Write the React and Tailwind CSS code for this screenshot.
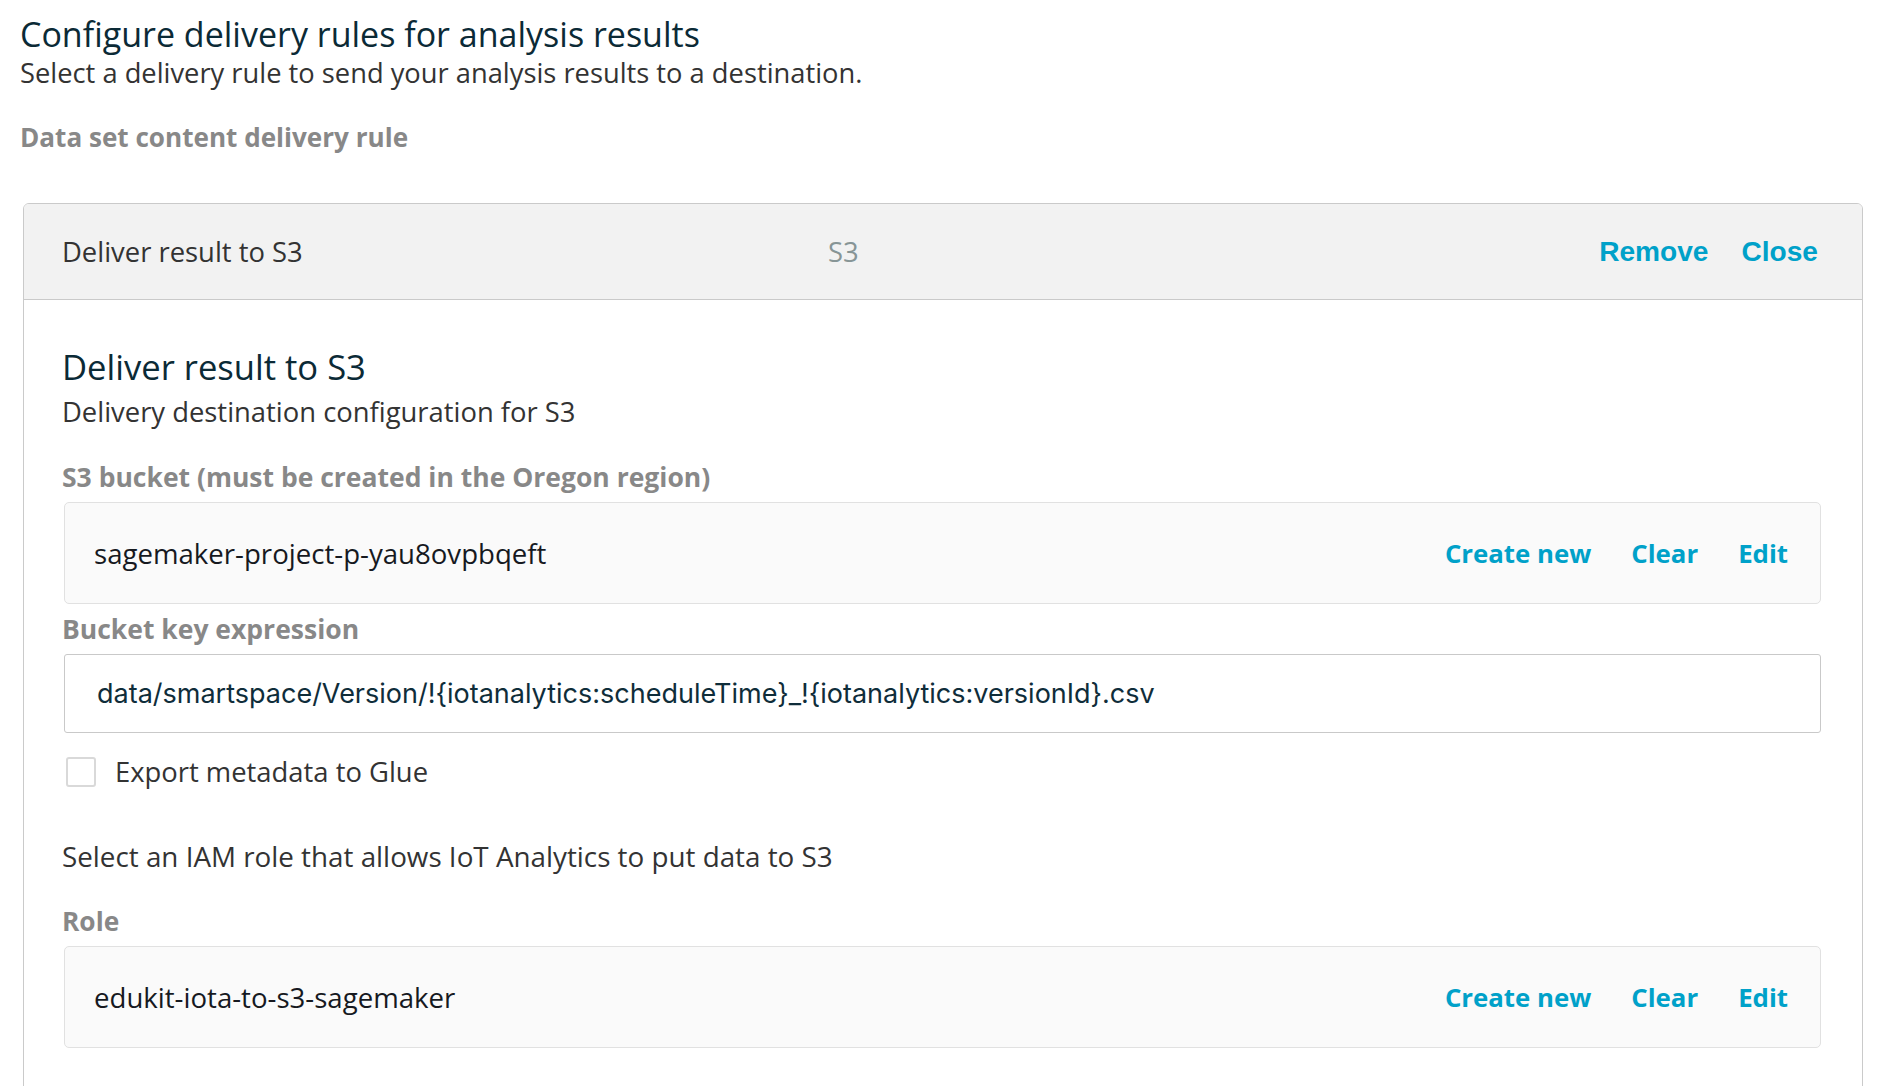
import React, { useState } from 'react';

const sans = "font-['Open_Sans','Noto_Sans',sans-serif]";

function LinkActions() {
    return (
        <div className="flex items-center gap-[40px] text-[25.8px] font-bold leading-[34px] text-[#00a1c9]">
            <button type="button">Create new</button>
            <button type="button">Clear</button>
            <button type="button">Edit</button>
        </div>
    );
}

function ResourceField({ value }) {
    return (
        <div className="flex h-[102px] items-center justify-between rounded-[5px] border border-[#e1e1e1] bg-[#fafafa] pl-[29px] pr-[32px]">
            <span className="text-[27.6px] leading-[34px] text-[#16191f]">{value}</span>
            <LinkActions />
        </div>
    );
}

export default function App() {
    const [exportGlue, setExportGlue] = useState(false);

    return (
        <div className={`${sans} min-h-screen bg-white pl-[20px] pr-[29px] pt-[14px]`}>
            {/* Page heading */}
            <h1 className="text-[34px] font-normal leading-[41px] text-[#0b2a36]">
                Configure delivery rules for analysis results
            </h1>
            <p className="mt-[1px] text-[27.3px] leading-[34px] text-[#333]">
                Select a delivery rule to send your analysis results to a destination.
            </p>
            <div className="mt-[30px] text-[26.1px] font-bold leading-[34px] text-[#888]">
                Data set content delivery rule
            </div>

            {/* Rule card */}
            <div className="ml-[3px] mt-[49px] overflow-hidden rounded-t-[6px] border border-[#cacaca]">
                <div className="flex h-[96px] items-center border-b border-[#cacaca] bg-[#f2f2f2] pl-[38px] pr-[44px]">
                    <span className="w-[766px] shrink-0 text-[27.4px] leading-[34px] text-[#333]">Deliver result to S3</span>
                    <span className="text-[27.4px] leading-[34px] text-[#879596]">S3</span>
                    <div className="ml-auto flex items-center gap-[33px] font-['Liberation_Sans',Arial,sans-serif] text-[28.1px] font-bold leading-[34px] text-[#00a1c9]">
                        <button type="button">Remove</button>
                        <button type="button">Close</button>
                    </div>
                </div>

                <div className="pb-[60px] pl-[40px] pr-[41px] pt-[46px]">
                    <h2 className="-ml-[2px] text-[34.6px] font-normal leading-[42px] text-[#0b2a36]">Deliver result to S3</h2>
                    <p className="-ml-[2px] mt-[7px] text-[27.4px] leading-[34px] text-[#333]">
                        Delivery destination configuration for S3
                    </p>

                    <div className="-ml-[2px] mt-[31px] text-[26.5px] font-bold leading-[34px] text-[#888]">
                        S3 bucket (must be created in the Oregon region)
                    </div>
                    <div className="mt-[8px]">
                        <ResourceField value="sagemaker-project-p-yau8ovpbqeft" />
                    </div>

                    <div className="-ml-[2px] mt-[8px] text-[26.5px] font-bold leading-[34px] text-[#888]">
                        Bucket key expression
                    </div>
                    <div className="mt-[8px] flex h-[79px] items-center rounded-[3px] border border-[#c9c9c9] bg-white pl-[32px] font-['Inter',sans-serif] text-[27px] leading-[34px] text-[#0f2d3a]">
                        data/smartspace/Version/!{'{'}iotanalytics:scheduleTime{'}'}_!{'{'}iotanalytics:versionId{'}'}.csv
                    </div>

                    <label className="ml-[2px] mt-[22px] flex h-[34px] cursor-pointer items-center gap-[19px]">
                        <input
                            type="checkbox"
                            checked={exportGlue}
                            onChange={(e) => setExportGlue(e.target.checked)}
                            className="h-[30px] w-[30px] appearance-none rounded-[3px] border-2 border-[#d9d9d9] bg-white"
                        />
                        <span className="text-[27.4px] leading-[34px] text-[#333]">Export metadata to Glue</span>
                    </label>

                    <p className="-ml-[2px] mt-[50px] text-[27.8px] leading-[34px] text-[#333]">
                        Select an IAM role that allows IoT Analytics to put data to S3
                    </p>

                    <div className="-ml-[2px] mt-[31px] text-[26.3px] font-bold leading-[34px] text-[#888]">Role</div>
                    <div className="mt-[8px]">
                        <ResourceField value="edukit-iota-to-s3-sagemaker" />
                    </div>
                </div>
            </div>
        </div>
    );
}
